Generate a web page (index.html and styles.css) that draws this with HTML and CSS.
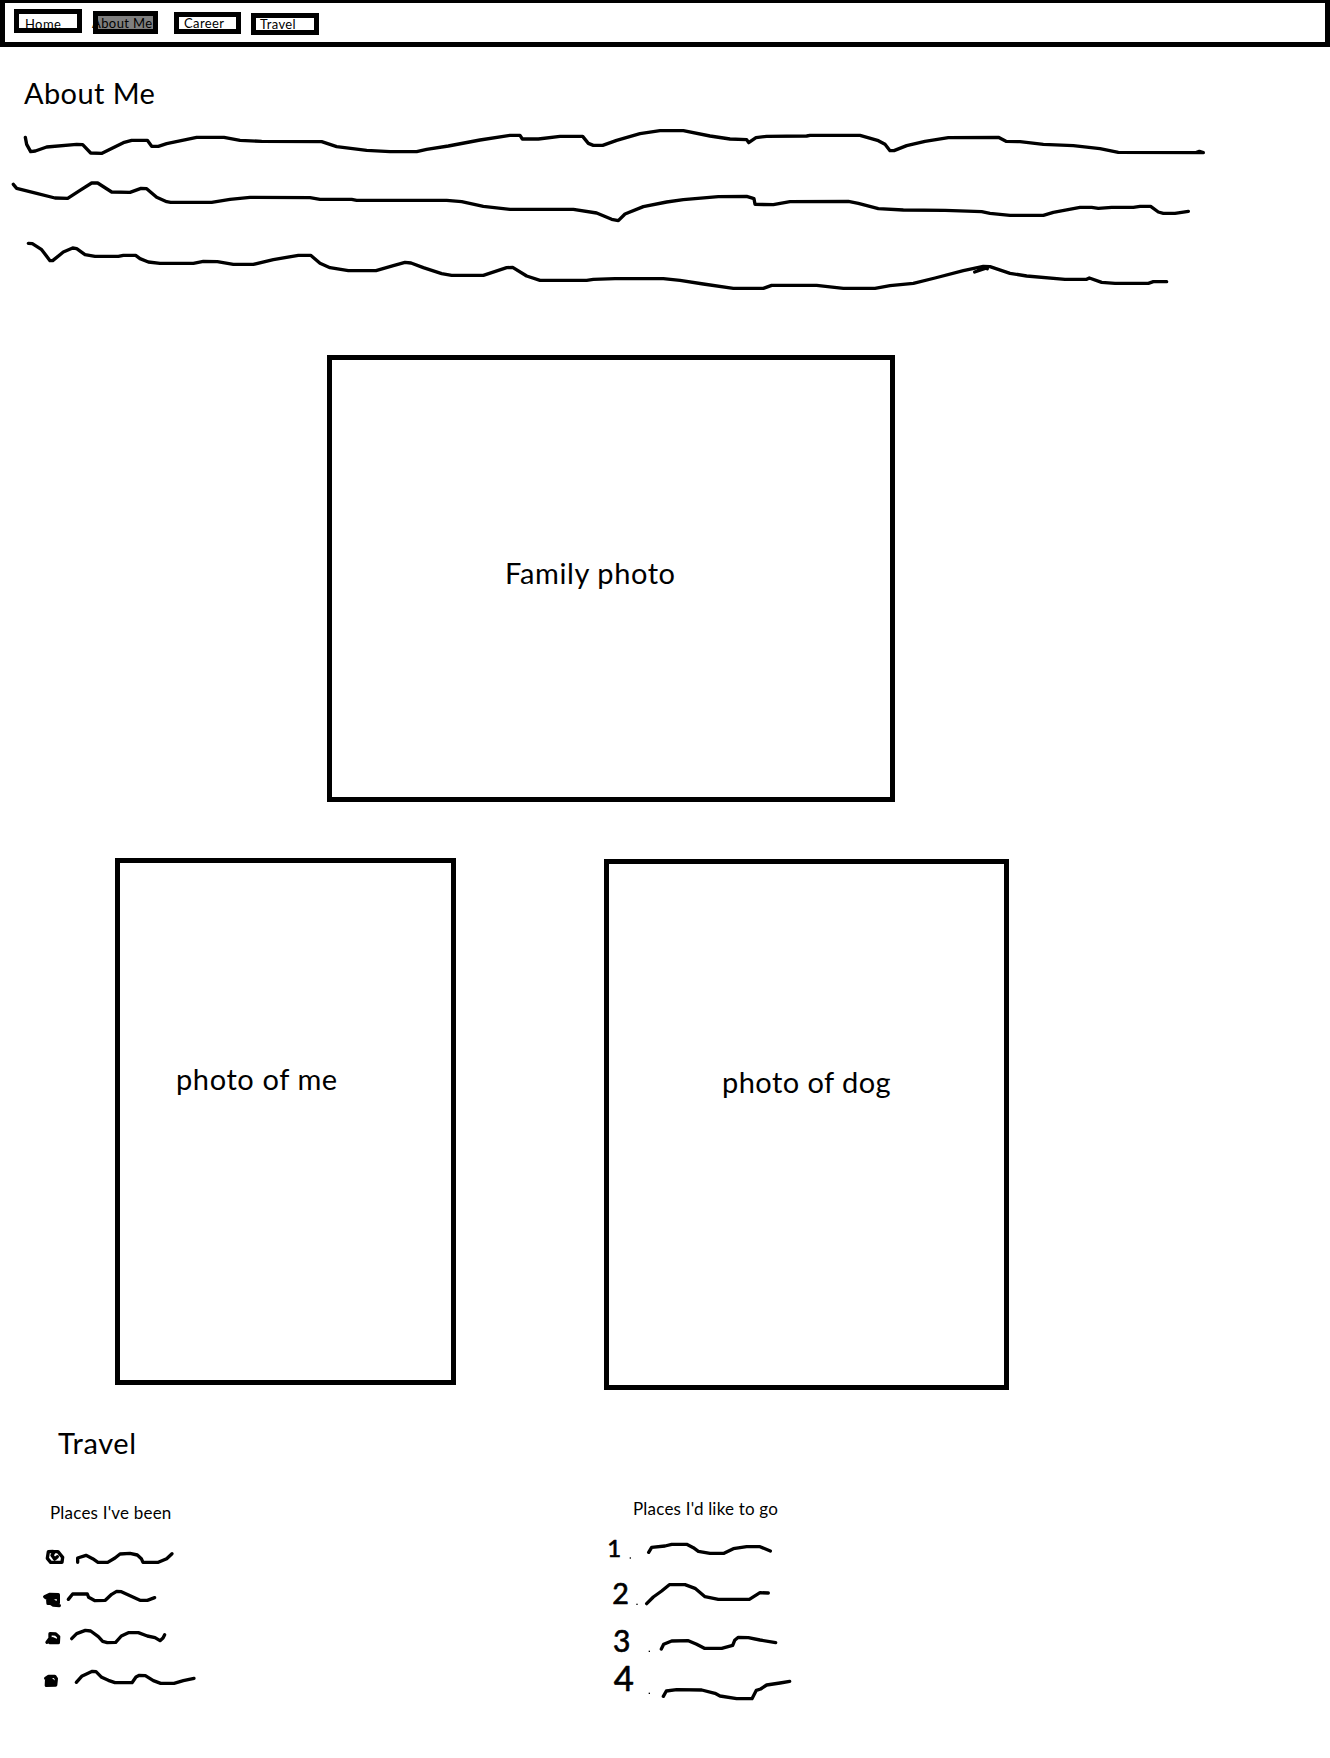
FILE: index.html
```html
<!DOCTYPE html>
<html lang="en">
<head>
<meta charset="utf-8">
<title>About Me</title>
<link rel="stylesheet" href="styles.css">
</head>
<body>
<nav class="nav">
  <a class="tab tab-home"><span>Home</span></a>
  <a class="tab tab-about"><span>About Me</span></a>
  <a class="tab tab-career"><span>Career</span></a>
  <a class="tab tab-travel"><span>Travel</span></a>
</nav>
<main>
  <section class="about">
    <h1 class="title">About Me</h1>
    <svg class="scribble intro" viewBox="0 0 3990 600" width="1330" height="200">
      <polyline points="76,82 80,103 92,125 106,123 140,111 230,103 248,104 272,129 306,130 370,98 395,91 442,91 455,109 475,109 500,101 590,82 672,82 720,91 785,94 965,95 1010,110 1100,121 1170,125 1250,125 1280,118 1345,108 1440,90 1530,76 1560,76 1567,87 1615,87 1680,79 1748,79 1765,100 1780,106 1808,106 1850,91 1920,71 1980,62 2050,62 2130,78 2190,87 2240,89 2246,98 2268,83 2300,79 2420,78 2430,76 2580,76 2635,92 2655,103 2670,122 2682,122 2720,107 2775,94 2845,83 2995,82 3018,94 3060,95 3130,103 3220,107 3300,116 3355,127 3610,128 3598,124 3590,127"/>
      <polyline points="40,223 50,235 110,250 165,264 203,265 240,241 275,219 293,219 335,246 390,247 423,235 440,236 470,262 500,275 512,277 635,277 690,268 750,262 930,263 960,268 1055,268 1070,271 1340,271 1385,275 1450,289 1530,298 1720,298 1790,309 1835,328 1855,332 1875,312 1930,290 2000,276 2050,269 2155,260 2240,259 2262,266 2265,283 2320,284 2370,275 2545,274 2575,280 2635,296 2710,300 2835,301 2945,305 2970,310 3030,316 3130,316 3160,307 3240,292 3275,292 3295,295 3335,292 3400,292 3420,289 3452,289 3475,306 3490,310 3525,310 3565,304"/>
      <polyline points="85,400 97,401 125,419 150,452 158,452 190,426 218,414 230,416 255,434 285,439 355,439 370,436 407,436 420,446 445,456 480,460 580,460 610,454 652,455 700,463 760,463 820,449 895,436 932,436 960,460 990,473 1045,482 1128,482 1180,467 1215,457 1233,459 1270,473 1325,491 1355,496 1450,496 1520,473 1538,472 1580,498 1620,511 1760,511 1780,508 1845,506 1990,506 2040,511 2110,522 2200,535 2290,535 2315,526 2450,526 2530,535 2625,535 2670,527 2740,520 2805,504 2890,482 2950,469 2970,470 3030,490 3080,498 3195,508 3260,508 3268,504 3305,517 3345,520 3445,520 3460,515 3500,515"/>
      <polyline points="2924,486 2962,473 2936,479 2950,470 2962,476"/>
    </svg>
  </section>
  <section class="photos">
    <div class="photo family"><span class="label">Family photo</span></div>
    <div class="pair">
      <div class="photo me"><span class="label">photo of me</span></div>
      <div class="photo dog"><span class="label">photo of dog</span></div>
    </div>
  </section>
  <section class="travel">
    <h2 class="title">Travel</h2>
    <div class="columns">
      <div class="been">
        <h3 class="subtitle">Places I've been</h3>
        <ul class="list">
          <li><svg class="scribble" viewBox="60 381 480 120" width="160" height="40">
            <polyline class="bullet" points="99,394 85,395 82,415 92,427 126,427 128,412 114,395 103,395 96,406 104,417 112,410"/>
            <polyline points="173,427 173,414 198,406 218,416 234,427 263,427 285,414 300,402 330,400 352,405 364,416 369,427 415,427 440,416 456,401"/>
          </svg></li>
          <li><svg class="scribble" viewBox="60 501 480 120" width="160" height="40">
            <polyline class="bullet" points="74,530 90,523 115,524 115,549 84,550 83,536 76,532 110,531 92,538 108,548 96,541 84,545 100,555 118,557"/>
            <polyline points="145,538 158,522 202,522 206,532 225,542 256,541 275,523 290,514 304,515 360,541 382,541 404,533"/>
          </svg></li>
          <li><svg class="scribble" viewBox="60 621 480 120" width="160" height="40">
            <polyline class="bullet" points="81,667 90,655 90,641 107,642 116,650 115,668 90,668 84,664 98,656 108,661 100,665 84,665"/>
            <polyline points="155,656 170,641 196,631 212,633 235,650 248,664 262,668 287,667 304,648 325,638 355,638 382,648 405,653 420,662 429,654 434,644"/>
          </svg></li>
          <li><svg class="scribble" viewBox="60 741 480 120" width="160" height="40">
            <polyline class="bullet" points="77,775 86,769 104,769 109,776 107,795 79,796 80,778 92,776 87,792 97,792 96,780 103,790"/>
            <polyline points="169,787 185,769 217,754 228,755 245,772 265,781 285,788 336,788 348,771 358,766 376,767 400,782 422,790 462,790 490,782 522,775"/>
          </svg></li>
        </ul>
      </div>
      <div class="wish">
        <h3 class="subtitle">Places I'd like to go</h3>
        <ol class="list">
          <li><svg class="scribble" viewBox="54 165 600 120" width="200" height="40">
            <text x="52" y="232" font-size="72">1</text><rect x="119" y="232" width="4" height="4"/>
            <polyline points="176,217 185,202 225,198 245,193 290,193 310,203 325,214 360,220 402,220 430,206 470,200 510,200 541,213"/>
          </svg></li>
          <li><svg class="scribble" viewBox="54 285 600 135" width="200" height="45">
            <text x="67" y="371" font-size="86">2</text><rect x="139" y="371" width="4" height="4"/>
            <polyline points="170,371 190,351 215,333 238,314 285,314 315,325 345,350 385,358 478,358 510,338 535,339"/>
          </svg></li>
          <li><svg class="scribble" viewBox="54 420 600 120" width="200" height="40">
            <text x="69" y="515" font-size="90">3</text><rect x="176" y="512" width="4" height="4"/>
            <polyline points="214,507 221,493 245,483 295,482 320,493 343,505 395,505 428,496 434,481 445,472 475,473 510,480 557,488"/>
          </svg></li>
          <li><svg class="scribble" viewBox="54 540 600 135" width="200" height="45">
            <text x="71" y="632" font-size="104">4</text><rect x="176" y="638" width="4" height="4"/>
            <polyline points="220,649 229,633 260,629 335,630 375,640 390,648 440,656 486,656 499,631 512,627 530,615 570,609 599,604"/>
          </svg></li>
        </ol>
      </div>
    </div>
  </section>
</main>
</body>
</html>
```
FILE: styles.css
```css
* { box-sizing: border-box; }
body { margin: 0; width: 1330px; min-height: 1758px; background: #fff; color: #000; font-family: Lato, "Open Sans", sans-serif; }
h1, h2, h3, ul, ol { margin: 0; padding: 0; font-weight: 400; }
ul, ol { list-style: none; }
main { display: flex; flex-direction: column; }

.nav { display: flex; align-items: flex-start; height: 47px; border: solid #000; border-width: 3px 5px 5px; padding-left: 9px; }
.tab { border: 5px solid #000; font-size: 13px; letter-spacing: .4px; line-height: 12px; white-space: nowrap; display: flex; }
.tab-home { width: 68px; height: 24px; margin-top: 6px; padding: 4px 0 0 6px; overflow: hidden; }
.tab-about { width: 65px; height: 23px; margin: 8px 0 0 11px; padding-top: 1px; background: #7f7f7f; }
.tab-about span { margin-left: -6px; }
.tab-career { width: 67px; height: 22px; margin: 9px 0 0 16px; padding-left: 5px; }
.tab-travel { width: 68px; height: 22px; margin: 10px 0 0 10px; padding-left: 4px; }

.title, .label { font-size: 29px; line-height: 32px; letter-spacing: .6px; white-space: nowrap; }
.about { height: 308px; padding-top: 30px; }
.about .title { padding-left: 24px; margin-bottom: 1px; letter-spacing: .4px; }
.scribble { display: block; overflow: visible; fill: none; stroke: #000; stroke-width: 10; stroke-linecap: round; stroke-linejoin: round; }
.scribble text, .scribble rect { fill: #000; stroke: none; }
.scribble text { font-family: Lato, sans-serif; stroke: #000; stroke-width: 2; }

.photo { border: 5px solid #000; }
.family { width: 568px; height: 447px; margin-left: 327px; padding: 197px 0 0 173px; }
.pair { display: flex; align-items: flex-start; gap: 148px; padding: 56px 0 0 115px; }
.me { width: 341px; height: 527px; padding: 200px 0 0 56px; }
.dog { width: 405px; height: 531px; margin-top: 1px; padding: 202px 0 0 113px; }
.dog .label { letter-spacing: .45px; }

.travel { padding-top: 37px; }
.travel .title { padding-left: 58px; }
.columns { display: flex; }
.been { width: 568px; padding: 44px 0 0 40px; }
.wish { padding: 40px 0 0 40px; }
.subtitle { font-size: 17px; line-height: 20px; letter-spacing: .2px; white-space: nowrap; }
.been .subtitle { padding-left: 10px; margin-bottom: 24px; }
.wish .subtitle { padding-left: 25px; margin-bottom: 16px; }
```
